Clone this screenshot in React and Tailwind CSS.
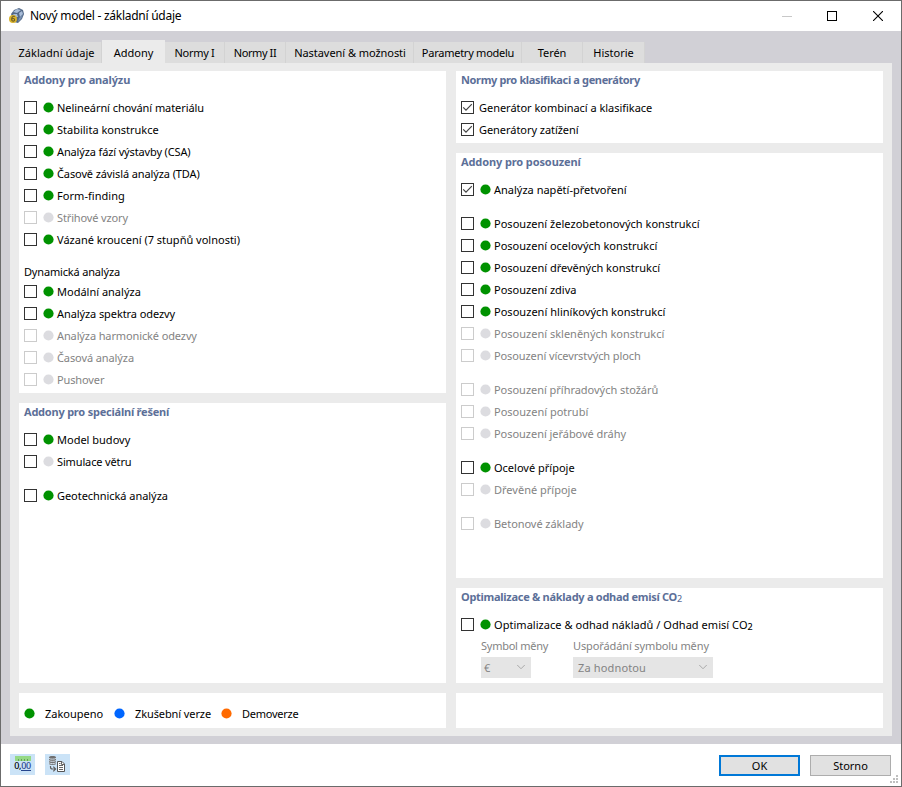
import { ChevronDown } from 'lucide-react';

const tabs = [
  { label: 'Základní údaje', width: 'w-[92px]', text: 'pl-[2px] tracking-[0.05px]' },
  { label: 'Addony', width: 'w-[63px]', active: true },
  { label: 'Normy I', width: 'w-[60px]', text: 'tracking-[-0.3px]' },
  { label: 'Normy II', width: 'w-[61px]', text: 'tracking-[-0.4px]' },
  { label: 'Nastavení & možnosti', width: 'w-[128px]', text: 'pl-px tracking-[-0.05px]' },
  { label: 'Parametry modelu', width: 'w-[108px]', text: 'pl-px tracking-[-0.25px]' },
  { label: 'Terén', width: 'w-[61px]', text: 'tracking-[-0.1px]' },
  { label: 'Historie', width: 'w-[62px]' },
];

const analysisAddons = [
  { label: 'Nelineární chování materiálu', status: 'on', text: 'tracking-[-0.07px]' },
  { label: 'Stabilita konstrukce', status: 'on' },
  { label: 'Analýza fází výstavby (CSA)', status: 'on', text: 'tracking-[-0.14px]' },
  { label: 'Časově závislá analýza (TDA)', status: 'on', text: 'tracking-[-0.11px]' },
  { label: 'Form-finding', status: 'on', text: 'tracking-[0.05px]' },
  { label: 'Střihové vzory', status: 'off', disabled: true, text: 'tracking-[-0.14px]' },
  { label: 'Vázané kroucení (7 stupňů volnosti)', status: 'on' },
];

const dynamicAddons = [
  { label: 'Modální analýza', status: 'on' },
  { label: 'Analýza spektra odezvy', status: 'on', text: 'tracking-[-0.09px]' },
  { label: 'Analýza harmonické odezvy', status: 'off', disabled: true, text: 'tracking-[-0.12px]' },
  { label: 'Časová analýza', status: 'off', disabled: true, text: 'tracking-[-0.1px]' },
  { label: 'Pushover', status: 'off', disabled: true, text: 'tracking-[-0.12px]' },
];

const specialAddons = [
  { label: 'Model budovy', status: 'on' },
  { label: 'Simulace větru', status: 'off', text: 'tracking-[-0.14px]' },
  { label: 'Geotechnická analýza', status: 'on', gap: true, text: 'tracking-[-0.05px]' },
];

const standards = [
  { label: 'Generátor kombinací a klasifikace', checked: true, text: 'tracking-[-0.03px]' },
  { label: 'Generátory zatížení', checked: true, text: 'tracking-[-0.05px]' },
];

const designAddons = [
  { label: 'Analýza napětí-přetvoření', status: 'on', checked: true },
  { label: 'Posouzení železobetonových konstrukcí', status: 'on', gap: true, text: 'tracking-[0.02px]' },
  { label: 'Posouzení ocelových konstrukcí', status: 'on' },
  { label: 'Posouzení dřevěných konstrukcí', status: 'on' },
  { label: 'Posouzení zdiva', status: 'on' },
  { label: 'Posouzení hliníkových konstrukcí', status: 'on', text: 'tracking-[0.03px]' },
  { label: 'Posouzení skleněných konstrukcí', status: 'off', disabled: true },
  { label: 'Posouzení vícevrstvých ploch', status: 'off', disabled: true, text: 'tracking-[-0.1px]' },
  { label: 'Posouzení příhradových stožárů', status: 'off', disabled: true, gap: true, text: 'tracking-[-0.03px]' },
  { label: 'Posouzení potrubí', status: 'off', disabled: true },
  { label: 'Posouzení jeřábové dráhy', status: 'off', disabled: true, text: 'tracking-[-0.04px]' },
  { label: 'Ocelové přípoje', status: 'on', gap: true },
  { label: 'Dřevěné přípoje', status: 'off', disabled: true },
  { label: 'Betonové základy', status: 'off', disabled: true, gap: true, text: 'tracking-[-0.06px]' },
];

const Dot = ({ color }) => (
  <svg className={`shrink-0 ${color}`} width="11" height="11" viewBox="0 0 11 11" fill="currentColor">
    <circle cx="5.5" cy="5.5" r="5.1" />
  </svg>
);

const Checkbox = ({ checked, disabled }) => (
  <span
    className={`mb-px flex h-[13px] w-[13px] shrink-0 items-center justify-center border bg-white ${
      disabled ? 'border-[#cccccc]' : 'border-[#333333]'
    }`}
  >
    {checked && (
      <svg width="11" height="11" viewBox="0 0 11 11" fill="none" stroke="#444" strokeWidth="1.2">
        <path d="M1.2 5.3 4 8.2 9.8 2.2" />
      </svg>
    )}
  </span>
);

const AddonRow = ({ addon }) => (
  <div
    className={`flex h-[22px] items-center whitespace-nowrap ${addon.gap ? 'mt-3' : ''} ${
      addon.disabled ? 'text-[#838383]' : 'text-black'
    }`}
  >
    <Checkbox checked={addon.checked} disabled={addon.disabled} />
    {addon.status && (
      <span className="mb-px ml-[6px] flex">
        <Dot color={addon.status === 'on' ? 'text-[#009200]' : 'text-[#dcdce0]'} />
      </span>
    )}
    <span className={`${addon.status ? 'ml-[3px]' : 'ml-[5px]'} ${addon.text || ''}`}>
      {addon.label}
    </span>
  </div>
);

const AddonList = ({ addons }) => addons.map((addon) => <AddonRow key={addon.label} addon={addon} />);

const Panel = ({ title, titleText, className, children }) => (
  <section className={`bg-white pl-[5px] ${className}`}>
    {title && (
      <h2 className={`h-[26px] leading-[17px] font-bold whitespace-nowrap text-[#5c6f98] ${titleText || ''}`}>
        {title}
      </h2>
    )}
    {children}
  </section>
);

const Co2 = () => (
  <>
    CO<span className="inline-block translate-y-px text-[9px] leading-none font-medium tracking-normal">2</span>
  </>
);

const Select = ({ value, className }) => (
  <div className={`flex h-[21px] items-center justify-between bg-[#e5e5e5] pr-[3px] text-[#838383] ${className}`}>
    <span>{value}</span>
    <ChevronDown className="mb-px h-[14px] w-[14px] text-[#a8a8a8]" strokeWidth={1.7} />
  </div>
);

const AppIcon = () => (
  <svg width="16" height="16" viewBox="0 0 16 16">
    <path d="M2 6 5 2l5-2 4 2 1 4-2 5-4 4-4-1z" fill="#526887" />
    <path d="m4 4 4-3 4 1-4 3zM10 5l3-2 1 3-3 3zM4 6l4 0 1 3-3 0z" fill="#a9bdd9" />
    <path d="m10 10 4-3-2 4-3 3z" fill="#7890b2" />
    <circle cx="4" cy="11" r="4" fill="#d8b32c" />
    <path d="M5.8 8.6C4.4 7.8 2.6 8.8 2.6 11.2c0 2.5 3 2.5 3 .6 0-1.5-2.2-1.7-3-.3" fill="none" stroke="#705d24" strokeWidth="1.1" />
  </svg>
);

const DecimalsButton = () => (
  <button className="flex h-[21px] w-[25px] flex-col items-center bg-[#cbe3f7] pt-[2px]">
    <svg width="16" height="5" viewBox="0 0 16 5" shapeRendering="crispEdges">
      <path d="M0 0h16v5H0z" fill="#95d985" />
      <path d="M3.5 3v2M6.5 3v2M9.5 3v2M12.5 3v2" stroke="#659c58" />
    </svg>
    <span className="flex text-[9px] leading-[10px] font-medium tracking-[-0.3px] whitespace-nowrap text-black">
      0,<span className="h-[10px] border-b border-[#26458e] leading-[10px] text-[#26458e]">00</span>
    </span>
  </button>
);

const TransferButton = () => (
  <button className="flex h-[21px] w-[25px] items-start bg-[#cbe3f7] pt-[2px] pl-1">
    <svg width="17" height="17" viewBox="0 0 17 17" fill="none">
      <path d="M0 1.2C0-.4 7-.4 7 1.2v6.6C7 9.4 0 9.4 0 7.8z" fill="#707070" />
      <path d="M0 2.4c1 1 6 1 7 0M0 4.6c1 1 6 1 7 0M0 6.8c1 1 6 1 7 0" stroke="#dce9f5" strokeWidth=".9" />
      <path d="M1.5 10v1q0 2 2 2H6M4.3 10.7 6.6 13l-2.3 2.3" stroke="#606060" strokeWidth="1.2" />
      <path d="M8.5 5.5H13l2.5 2.5v7.5h-7z" fill="#fff" stroke="#555" />
      <path d="M12.5 5.5v3h3M10 7.5h1.5M10 9.5h4M10 11.5h4M10 13.5h4" stroke="#666" />
    </svg>
  </button>
);

const TitleBar = () => (
  <header className="flex h-[30px] items-center bg-white pl-2">
    <AppIcon />
    <h1 className="ml-[5px] text-[12px] tracking-[-0.26px]">Nový model - základní údaje</h1>
    <div className="ml-auto flex items-center pr-[18px]">
      <span className="h-px w-[10px] bg-[#c8c8c8]" />
      <span className="ml-[35px] h-[10px] w-[10px] border border-black" />
      <svg className="ml-9" width="10" height="10" viewBox="0 0 10 10" stroke="#000" strokeWidth="1.1">
        <path d="m0 0 10 10M10 0 0 10" />
      </svg>
    </div>
  </header>
);

const Tabs = () => (
  <nav className="flex h-[23px] items-end">
    {tabs.map((tab) => (
      <div
        key={tab.label}
        className={`flex justify-center whitespace-nowrap ${tab.width} ${tab.text || ''} ${
          tab.active
            ? 'h-[23px] bg-[#ebebeb] pt-[5px]'
            : 'h-[21px] border-r border-[#d3d3d3] bg-[#dddddd] pt-[3px]'
        }`}
      >
        {tab.label}
      </div>
    ))}
  </nav>
);

const ResizeGrip = () => (
  <svg className="absolute right-[2px] bottom-[2px]" width="9" height="9" viewBox="0 0 9 9" fill="#bfbfbf">
    <path d="M6 0h2v2H6zM3 3h2v2H3zM6 3h2v2H6zM0 6h2v2H0zM3 6h2v2H3zM6 6h2v2H6z" />
  </svg>
);

export default function App() {
  return (
    <div className="relative flex h-[787px] w-[902px] flex-col border border-[#6b6b6b] bg-white font-['Noto_Sans',sans-serif] text-[11px] leading-[16px] text-black">
      <TitleBar />

      <main className="h-[713px] bg-[#d1d0d6] px-[9px] pt-[9px]">
        <Tabs />
        <div className="flex h-[673px] w-[882px] gap-[10px] bg-[#ebebeb] px-[9px] pt-[8px]">
          {/* Left column */}
          <div className="flex w-[427px] flex-col gap-[10px]">
            <Panel title="Addony pro analýzu" titleText="tracking-[-0.13px]" className="h-[322px]">
              <AddonList addons={analysisAddons} />
              <h3 className="mt-[11px] h-[19px] leading-[19px] tracking-[-0.17px]">Dynamická analýza</h3>
              <AddonList addons={dynamicAddons} />
            </Panel>
            <Panel title="Addony pro speciální řešení" titleText="tracking-[-0.22px]" className="h-[280px]">
              <AddonList addons={specialAddons} />
            </Panel>
            <Panel className="flex h-[35px] items-center pt-[6px]">
              <Dot color="text-[#009200]" />
              <span className="ml-[10px] w-[60px]">Zakoupeno</span>
              <span className="ml-[9px] flex"><Dot color="text-[#0066ff]" /></span>
              <span className="ml-[10px] w-[77px] tracking-[-0.1px] whitespace-nowrap">Zkušební verze</span>
              <span className="ml-[9px] flex"><Dot color="text-[#ff6a00]" /></span>
              <span className="ml-[10px] tracking-[-0.25px]">Demoverze</span>
            </Panel>
          </div>

          {/* Right column */}
          <div className="flex w-[427px] flex-col gap-[10px]">
            <Panel title="Normy pro klasifikaci a generátory" titleText="tracking-[-0.36px]" className="h-[72px]">
              <AddonList addons={standards} />
            </Panel>
            <Panel title="Addony pro posouzení" titleText="tracking-[-0.11px]" className="h-[425px]">
              <AddonList addons={designAddons} />
            </Panel>
            <Panel
              title={<>Optimalizace & náklady a odhad emisí <Co2 /></>}
              titleText="tracking-[-0.28px]"
              className="h-[95px]"
            >
              <AddonRow
                addon={{
                  label: <>Optimalizace & odhad nákladů / Odhad emisí <Co2 /></>,
                  status: 'on',
                  text: 'tracking-[0.04px]',
                }}
              />
              <div className="flex pl-5 text-[#838383]">
                <div className="w-[92px]">
                  <p className="mt-[2px] h-[19px] tracking-[-0.26px]">Symbol měny</p>
                  <Select value="€" className="w-[50px] pl-[3px]" />
                </div>
                <div>
                  <p className="mt-[2px] h-[19px] tracking-[-0.12px]">Uspořádání symbolu měny</p>
                  <Select value="Za hodnotou" className="w-[140px] pl-[5px] tracking-[0.15px]" />
                </div>
              </div>
            </Panel>
            <Panel className="h-[35px]" />
          </div>
        </div>
      </main>

      <footer className="flex h-[42px] pt-[10px] pl-[9px]">
        <DecimalsButton />
        <span className="ml-[10px] flex h-[21px]"><TransferButton /></span>
        <div className="ml-auto flex gap-[10px] pr-[10px]">
          <button className="mt-px h-[21px] w-[81px] border-2 border-[#0078d7] bg-[#e1e1e1] leading-[17px]">OK</button>
          <button className="mt-px h-[21px] w-[81px] border border-[#adadad] bg-[#e1e1e1]">Storno</button>
        </div>
      </footer>
      <ResizeGrip />
    </div>
  );
}
